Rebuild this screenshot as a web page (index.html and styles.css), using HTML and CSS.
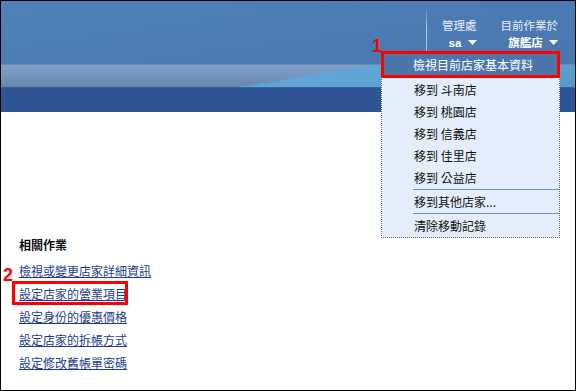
FILE: index.html
```html
<!DOCTYPE html>
<html lang="zh-Hant">
<head>
  <meta charset="UTF-8">
  <title>店家管理</title>
  <link rel="stylesheet" href="styles.css">
</head>
<body>
  <div class="frame">
    <header class="topbar">
      <div class="band band-top">
        <nav class="usernav">
          <div class="nav-sep"></div>
          <div class="nav-col">
            <span class="nav-label">管理處</span>
            <span class="nav-value">sa <svg class="caret" width="9" height="5" viewBox="0 0 9 5"><path d="M0 0h9L4.5 5z" fill="#fff"/></svg></span>
          </div>
          <div class="nav-col">
            <span class="nav-label">目前作業於</span>
            <span class="nav-value">旗艦店 <svg class="caret" width="9" height="5" viewBox="0 0 9 5"><path d="M0 0h9L4.5 5z" fill="#fff"/></svg></span>
          </div>
        </nav>
      </div>
      <div class="band band-light"></div>
      <div class="band band-dark"></div>
    </header>

    <!-- 店家切換選單 -->
    <div class="store-menu">
      <span class="mark mark-1">1</span>
      <ul>
        <li class="menu-current">檢視目前店家基本資料</li>
        <li>移到 斗南店</li>
        <li>移到 桃園店</li>
        <li>移到 信義店</li>
        <li>移到 佳里店</li>
        <li>移到 公益店</li>
        <li class="menu-sep">移到其他店家...</li>
        <li class="menu-sep">清除移動記錄</li>
      </ul>
    </div>

    <main class="content">
      <h3 class="section-title">相關作業</h3>
      <ul class="task-list">
        <li><a href="#">檢視或變更店家詳細資訊</a></li>
        <li class="marked"><span class="mark mark-2">2</span><a href="#">設定店家的營業項目</a></li>
        <li><a href="#">設定身份的優惠價格</a></li>
        <li><a href="#">設定店家的拆帳方式</a></li>
        <li><a href="#">設定修改舊帳單密碼</a></li>
      </ul>
    </main>
  </div>
</body>
</html>
```

FILE: styles.css
```css
html, body {
  margin: 0;
  padding: 0;
  background: #fff;
}
body {
  font-family: "Noto Sans CJK TC", "Liberation Sans", sans-serif;
  font-size: 12px;
}
.frame {
  position: relative;
  width: 576px;
  height: 391px;
  box-sizing: border-box;
  border: 1px solid #000;
  overflow: hidden;
}

/* header */
.band-top {
  height: 63px;
  background: linear-gradient(172deg, #4f80b9 0%, #4c7bb4 55%, #4a76ac 100%);
  display: flex;
  justify-content: flex-end;
}
.band-light {
  height: 22px;
  background:
    linear-gradient(170deg, transparent 0%, transparent 51%, #5ea6d6 54%, #5898c8 100%),
    linear-gradient(180deg, #7f9fc8 0%, #7896be 45%, #6686ac 100%);
  border-top: 1px solid #6a8ab4;
}
.band-dark {
  height: 24px;
  background: #2f5597;
  border-top: 1px solid #3a5f98;
}
.usernav {
  display: flex;
  align-items: flex-start;
  padding: 16px 17px 0 0;
}
.nav-sep {
  width: 1px;
  height: 52px;
  margin-top: -8px;
  margin-right: 15px;
  background: linear-gradient(180deg, rgba(255,255,255,0.1), rgba(220,232,246,0.8) 40%, rgba(220,232,246,0.6) 80%, rgba(255,255,255,0.1));
}
.nav-col {
  display: flex;
  flex-direction: column;
  align-items: flex-end;
  margin-right: 24px;
  color: #fff;
}
.nav-col:last-child {
  margin-right: 0;
}
.nav-label {
  font-size: 11.5px;
  line-height: 16px;
  color: #e8f0fa;
}
.nav-value {
  margin-top: 2px;
  line-height: 16px;
  font-weight: bold;
  font-family: "Liberation Sans", "Noto Sans CJK TC", sans-serif;
  font-size: 11.5px;
}
.caret {
  margin-left: 3px;
  vertical-align: 2px;
}

/* dropdown */
.store-menu {
  position: absolute;
  left: 380px;
  top: 50px;
  width: 179px;
  height: 187px;
  box-sizing: border-box;
  background: #e4eefb;
  border: 1px dotted #6b6b6b;
  border-top: none;
}
.store-menu ul {
  list-style: none;
  margin: 0;
  padding: 0;
}
.store-menu li {
  line-height: 22px;
  padding-left: 32px;
  color: #111;
}
.store-menu .menu-current {
  margin: 0 -1px;
  height: 27px;
  line-height: 21px;
  box-sizing: border-box;
  padding-left: 29px;
  background: #4b76aa;
  color: #fff;
  border: 3px solid #f00;
}
.store-menu li:nth-child(2) {
  margin-top: 1px;
}
.store-menu .menu-sep {
  position: relative;
  line-height: 23px;
  margin-top: 1px;
}
.store-menu .menu-sep::before {
  content: "";
  position: absolute;
  left: 31px;
  right: 0;
  top: -1px;
  border-top: 1px solid #6b8fd1;
}

/* annotations */
.mark {
  position: absolute;
  color: #f00;
  font-family: "Liberation Sans", sans-serif;
  font-weight: bold;
  font-size: 18px;
  line-height: 18px;
}
.mark-1 {
  left: -10px;
  top: -14px;
}
.mark-2 {
  left: -16px;
  top: -16px;
}

/* content */
.content {
  padding: 121px 0 0 18px;
}
.section-title {
  margin: 0;
  font-size: 12px;
  line-height: 23px;
  font-weight: bold;
  color: #111;
}
.task-list {
  list-style: none;
  margin: 3px 0 0;
  padding: 0;
}
.task-list li {
  position: relative;
  line-height: 23px;
}
.task-list a {
  color: #1d3c8f;
  text-decoration: underline;
}
.task-list .marked::after {
  content: "";
  position: absolute;
  left: -7px;
  top: -1px;
  width: 116px;
  height: 24px;
  box-sizing: border-box;
  border: 3px solid #f00;
}
```
